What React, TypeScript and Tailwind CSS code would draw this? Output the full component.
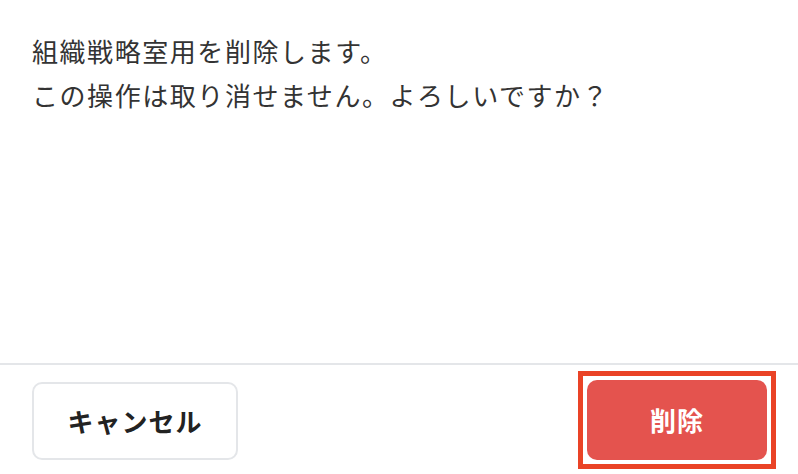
import React from "react";

export default function App() {
    return (
        <div
            className="flex h-[474px] w-[798px] flex-col bg-white text-[#333333]"
            style={{ fontFamily: '"Noto Sans CJK JP", "Noto Sans", sans-serif' }}
        >
            <div className="flex-1 px-8 pt-[29px]">
                <p className="text-[26px] leading-[44px] tracking-[0.06em]">
                    組織戦略室用を削除します。
                    <br />
                    この操作は取り消せません。よろしいですか？
                </p>
            </div>

            <div className="flex h-[111px] items-center justify-between border-t-2 border-[#e4e6e9] pl-8 pr-[22px]">
                <button
                    type="button"
                    className="mt-[2px] flex h-[78px] w-[206px] items-center justify-center rounded-[10px] border-2 border-[#e4e6e9] bg-white text-[26px] font-bold tracking-[0.04em] text-[#222222]"
                >
                    キャンセル
                </button>
                <div className="border-[5px] border-[#ea4326] p-[4px]">
                    <button
                        type="button"
                        className="flex h-[80px] w-[180px] items-center justify-center rounded-[10px] bg-[#e4534e] text-[26px] font-bold tracking-[0.04em] text-white"
                    >
                        削除
                    </button>
                </div>
            </div>
        </div>
    );
}
